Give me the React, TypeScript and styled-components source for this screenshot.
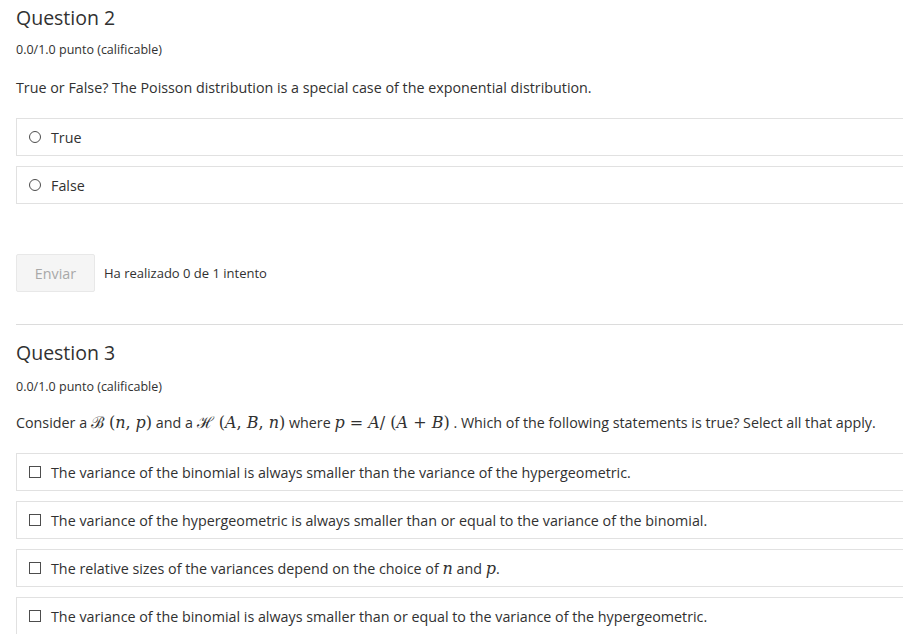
import * as React from 'react';
import styled, { createGlobalStyle } from 'styled-components';

const GlobalStyle = createGlobalStyle`
  html, body {
    margin: 0;
    padding: 0;
    background: #ffffff;
    overflow: hidden;
  }
  body {
    font-family: "Open Sans", "Noto Sans", sans-serif;
    color: #313131;
    -webkit-font-smoothing: antialiased;
  }
`

const Page = styled.div`
  width: 930px;
  padding: 5px 0 0 16px;
`

const Heading = styled.h3`
  margin: 0;
  font-size: 19.5px;
  font-weight: 400;
  line-height: 26px;
  color: #313131;
`

const Score = styled.div<{ $top?: number }>`
  margin-top: ${p => p.$top ?? 11}px;
  font-size: 12.5px;
  line-height: 16px;
  color: #313131;
`

const Prompt = styled.p<{ $top?: number }>`
  margin: ${p => p.$top ?? 20}px 0 0;
  font-size: 14.3px;
  line-height: 20px;
  color: #313131;
`

const Choices = styled.div`
  display: flex;
  flex-direction: column;
  gap: 10px;
  margin-top: 20px;
`

const Choice = styled.label`
  display: flex;
  align-items: center;
  gap: 10px;
  height: 38px;
  box-sizing: border-box;
  padding: 0 12px;
  border: 1px solid #e1e1e1;
  font-size: 14.3px;
  color: #313131;
`

const Radio = styled.span`
  width: 12px;
  height: 12px;
  box-sizing: border-box;
  border: 1px solid #4d4d4d;
  border-radius: 50%;
  flex: none;
`

const Check = styled.span`
  width: 12px;
  height: 12px;
  box-sizing: border-box;
  border: 1px solid #4d4d4d;
  flex: none;
`

const Actions = styled.div`
  display: flex;
  align-items: center;
  gap: 9px;
  margin-top: 50px;
`

const SubmitButton = styled.button`
  width: 79px;
  height: 38px;
  border: 1px solid #e8e8e8;
  background: #f5f5f5;
  color: #a8a8a8;
  font-family: "Open Sans", "Noto Sans", sans-serif;
  font-size: 14.3px;
  border-radius: 2px;
`

const Attempts = styled.span`
  font-size: 13px;
  color: #313131;
`

const Divider = styled.hr`
  margin: 32px 0 15px;
  border: none;
  border-top: 1px solid #dcdcdc;
`

const Math = styled.span`
  font-family: "DejaVu Serif", "Liberation Serif", serif;
  font-style: italic;
  font-size: 16px;
`

const MathUp = styled.span`
  font-family: "DejaVu Serif", "Liberation Serif", serif;
  font-style: normal;
  font-size: 16px;
`

const App = () => {
  return (
    <Page>
      <GlobalStyle />
      <Heading>Question 2</Heading>
      <Score>0.0/1.0 punto (calificable)</Score>
      <Prompt>True or False? The Poisson distribution is a special case of the exponential distribution.</Prompt>
      <Choices>
        <Choice><Radio />True</Choice>
        <Choice><Radio />False</Choice>
      </Choices>
      <Actions>
        <SubmitButton>Enviar</SubmitButton>
        <Attempts>Ha realizado 0 de 1 intento</Attempts>
      </Actions>
      <Divider />
      <Heading>Question 3</Heading>
      <Score $top={13}>0.0/1.0 punto (calificable)</Score>
      <Prompt $top={18}>
        Consider a <MathUp>ℬ (</MathUp><Math>n</Math><MathUp>, </MathUp><Math>p</Math><MathUp>)</MathUp> and a{' '}
        <MathUp>ℋ (</MathUp><Math>A</Math><MathUp>, </MathUp><Math>B</Math><MathUp>, </MathUp><Math>n</Math><MathUp>)</MathUp>{' '}
        where <Math>p</Math><MathUp> = </MathUp><Math>A</Math><MathUp>/ (</MathUp><Math>A</Math><MathUp> + </MathUp><Math>B</Math><MathUp>)</MathUp>
        {' '}. Which of the following statements is true? Select all that apply.
      </Prompt>
      <Choices>
        <Choice><Check />The variance of the binomial is always smaller than the variance of the hypergeometric.</Choice>
        <Choice><Check />The variance of the hypergeometric is always smaller than or equal to the variance of the binomial.</Choice>
        <Choice><Check /><span>The relative sizes of the variances depend on the choice of <Math>n</Math> and <Math>p</Math>.</span></Choice>
        <Choice><Check />The variance of the binomial is always smaller than or equal to the variance of the hypergeometric.</Choice>
      </Choices>
    </Page>
  );
}

export default App;
